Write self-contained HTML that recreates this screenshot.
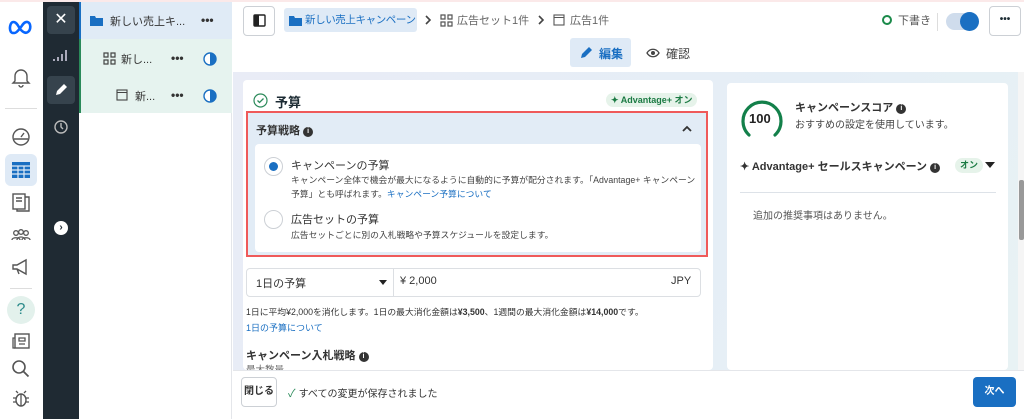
<!DOCTYPE html>
<html><head><meta charset="utf-8"><style>
*{box-sizing:border-box;margin:0;padding:0}
body{width:1024px;height:419px;overflow:hidden;font-family:"Liberation Sans","Noto Sans CJK JP",sans-serif;color:#1c2b33;background:#fff;position:relative;font-size:12px}
.abs{position:absolute;white-space:nowrap}
.ico{position:absolute;left:10px;width:22px;height:22px}
.i{display:inline-block;width:10px;height:10px;border-radius:50%;background:#333;color:#fff;font-size:7px;text-align:center;line-height:10px;vertical-align:1px}
</style></head><body>
<div class="abs" style="left:0;top:0;width:1024px;height:2px;background:#fbe9e9"></div>
<!-- left icon bar -->
<div class="abs" style="left:0;top:2px;width:43px;height:417px;background:#fff">
<svg class="abs" style="left:8px;top:17px" width="26" height="16" viewBox="0 0 26 16"><path d="M3 13C1 10 2 3 5.5 3S11 9 13 11s5 4 7.5 1.5S23 4 19.5 3 14 7 13 8 9 14 6.5 14 4 14 3 13Z" fill="none" stroke="#0866ff" stroke-width="2.6"/></svg>
<svg class="ico" style="top:64px" viewBox="0 0 22 22"><path d="M5 15V10a6 6 0 0 1 12 0v5l2 2H3zM9 19a2 2 0 0 0 4 0" fill="none" stroke="#555" stroke-width="1.4"/></svg>
<div class="abs" style="left:5px;top:106px;width:32px;height:1px;background:#ddd"></div>
<svg class="ico" style="top:124px" viewBox="0 0 22 22"><circle cx="11" cy="11" r="8" fill="none" stroke="#555" stroke-width="1.4"/><path d="M4 13h14M11 11l3-4" stroke="#555" stroke-width="1.4"/></svg>
<div class="abs" style="left:5px;top:152px;width:32px;height:32px;background:#dfeaf6;border-radius:6px"></div>
<svg class="ico" style="top:157px" viewBox="0 0 22 22"><rect x="2" y="3" width="18" height="16" fill="#1a6fc2"/><path d="M2 7h18M2 11h18M2 15h18M8 7v12M14 7v12" stroke="#dfeaf6" stroke-width="1.2"/></svg>
<svg class="ico" style="top:189px" viewBox="0 0 22 22"><rect x="3" y="3" width="12" height="15" fill="none" stroke="#555" stroke-width="1.4"/><path d="M15 6h4v14H7v-2M6 7h6M6 10h6" stroke="#555" stroke-width="1.4" fill="none"/></svg>
<svg class="ico" style="top:222px" viewBox="0 0 22 22"><circle cx="6" cy="9" r="2.3" fill="none" stroke="#555" stroke-width="1.3"/><circle cx="11" cy="8" r="2.3" fill="none" stroke="#555" stroke-width="1.3"/><circle cx="16" cy="9" r="2.3" fill="none" stroke="#555" stroke-width="1.3"/><path d="M2 16c0-3 8-3 8 0M7 16c0-4 8-4 8 0M12 16c0-3 8-3 8 0" fill="none" stroke="#555" stroke-width="1.3"/></svg>
<svg class="ico" style="top:254px" viewBox="0 0 22 22"><path d="M3 9h4l9-5v14l-9-5H3zM7 13l2 5" fill="none" stroke="#555" stroke-width="1.4"/></svg>
<div class="abs" style="left:10px;top:286px;width:22px;height:1px;background:#ddd"></div>
<div class="abs" style="left:7px;top:294px;width:28px;height:28px;border-radius:50%;background:#e3f1ec;color:#2a8a8a;text-align:center;line-height:28px;font-size:16px">?</div>
<svg class="ico" style="top:328px" viewBox="0 0 22 22"><rect x="5" y="4" width="14" height="14" fill="none" stroke="#555" stroke-width="1.4"/><path d="M5 8H3v10h2M9 8h6v3H9zM9 14h6" stroke="#555" stroke-width="1.3" fill="none"/></svg>
<svg class="ico" style="top:356px" viewBox="0 0 22 22"><circle cx="9" cy="9" r="6" fill="none" stroke="#555" stroke-width="1.6"/><path d="M13.5 13.5l5 5" stroke="#555" stroke-width="1.8"/></svg>
<svg class="ico" style="top:386px" viewBox="0 0 22 22"><ellipse cx="11" cy="12" rx="5" ry="6" fill="none" stroke="#555" stroke-width="1.4"/><path d="M11 6v12M6 10H3M6 14H3M16 10h3M16 14h3M8 5l-2-2M14 5l2-2" stroke="#555" stroke-width="1.3"/></svg>
</div>
<!-- dark bar -->
<div class="abs" style="left:43px;top:2px;width:36px;height:417px;background:#1f2a33">
<div class="abs" style="left:4px;top:4px;width:28px;height:28px;background:#36434d;border-radius:4px;color:#fff;text-align:center;line-height:28px;font-size:16px">✕</div>
<svg class="abs" style="left:10px;top:46px" width="16" height="14"><path d="M1 13v-2M5 13V9M9 13V6M13 13V2" stroke="#aab" stroke-width="2"/></svg>
<div class="abs" style="left:4px;top:74px;width:28px;height:28px;background:#36434d;border-radius:4px"></div>
<svg class="abs" style="left:11px;top:81px" width="14" height="14"><path d="M2 12l1-4 7-7 3 3-7 7z" fill="#fff"/></svg>
<svg class="abs" style="left:10px;top:117px" width="16" height="16"><circle cx="8" cy="8" r="6" fill="none" stroke="#bbb" stroke-width="1.4"/><path d="M8 4v4l2 2" stroke="#bbb" stroke-width="1.4" fill="none"/></svg>
<div class="abs" style="left:11px;top:219px;width:14px;height:14px;border-radius:50%;background:#fff;color:#1f2a33;font-size:10px;font-weight:bold;text-align:center;line-height:14px">›</div>
</div>
<!-- tree -->
<div class="abs" style="left:79px;top:2px;width:153px;height:417px;background:#fff;border-right:1px solid #e4e6ea">
<div class="abs" style="left:0;top:0;width:153px;height:37px;background:#e0ebf6;border-left:2px solid #1a6fc2"></div>
<svg class="abs" style="left:11px;top:13px" width="13" height="11"><path d="M0 1h5l1 2h7v8H0z" fill="#1a6fc2"/></svg>
<div class="abs" style="left:31px;top:11px;font-size:11px;color:#333">新しい売上キ...</div>
<div class="abs" style="left:122px;top:11px;font-size:12px;font-weight:bold;color:#333">•••</div>
<div class="abs" style="left:0;top:37px;width:153px;height:74px;background:#e6f3ef;border-left:2px solid #2b8a5a"></div>
<svg class="abs" style="left:24px;top:50px" width="13" height="13"><path d="M1 1h4v4H1zM8 1h4v4H8zM1 8h4v4H1zM8 8h4v4H8z" fill="none" stroke="#444" stroke-width="1.2"/></svg>
<div class="abs" style="left:42px;top:49px;font-size:11px;color:#333">新し...</div>
<div class="abs" style="left:92px;top:49px;font-size:12px;font-weight:bold;color:#333">•••</div>
<svg class="abs" style="left:124px;top:50px" width="14" height="14"><circle cx="7" cy="7" r="6" fill="#fff" stroke="#1a6fc2" stroke-width="1.4"/><path d="M7 1a6 6 0 0 1 0 12z" fill="#1a6fc2"/></svg>
<svg class="abs" style="left:37px;top:87px" width="12" height="12"><rect x="1" y="1" width="10" height="10" fill="none" stroke="#444" stroke-width="1.1"/><path d="M1 3.5h10" stroke="#444"/></svg>
<div class="abs" style="left:56px;top:86px;font-size:11px;color:#333">新...</div>
<div class="abs" style="left:92px;top:86px;font-size:12px;font-weight:bold;color:#333">•••</div>
<svg class="abs" style="left:124px;top:87px" width="14" height="14"><circle cx="7" cy="7" r="6" fill="#fff" stroke="#1a6fc2" stroke-width="1.4"/><path d="M7 1a6 6 0 0 1 0 12z" fill="#1a6fc2"/></svg>
</div>
<!-- main header -->
<div class="abs" style="left:233px;top:2px;width:791px;height:70px;background:#fff">
<div class="abs" style="left:10px;top:4px;width:32px;height:30px;border:1px solid #ccd0d5;border-radius:4px"></div>
<svg class="abs" style="left:20px;top:12px" width="13" height="13"><rect x="1" y="1" width="11" height="11" rx="1" fill="none" stroke="#222" stroke-width="1.4"/><rect x="1" y="1" width="5" height="11" fill="#222"/></svg>
<div class="abs" style="left:51px;top:6px;width:133px;height:24px;background:#dfeaf6;border-radius:3px"></div>
<svg class="abs" style="left:56px;top:13px" width="13" height="11"><path d="M0 1h5l1 2h7v8H0z" fill="#1a6fc2"/></svg>
<div class="abs" style="left:72px;top:10px;font-size:10.5px;letter-spacing:-0.4px;color:#1a6fc2">新しい売上キャンペーン</div>
<svg class="abs" style="left:192px;top:13px" width="7" height="10"><path d="M1 1l4 4-4 4" stroke="#444" stroke-width="1.6" fill="none"/></svg>
<svg class="abs" style="left:207px;top:12px" width="13" height="13"><path d="M1 1h4v4H1zM8 1h4v4H8zM1 8h4v4H1zM8 8h4v4H8z" fill="none" stroke="#555" stroke-width="1.2"/></svg>
<div class="abs" style="left:224px;top:10px;font-size:11px;color:#666">広告セット1件</div>
<svg class="abs" style="left:305px;top:13px" width="7" height="10"><path d="M1 1l4 4-4 4" stroke="#444" stroke-width="1.6" fill="none"/></svg>
<svg class="abs" style="left:320px;top:12px" width="12" height="12"><rect x="1" y="1" width="10" height="10" fill="none" stroke="#555" stroke-width="1.1"/><path d="M1 3.5h10" stroke="#555"/></svg>
<div class="abs" style="left:337px;top:10px;font-size:11px;color:#666">広告1件</div>
<div class="abs" style="left:649px;top:13px;width:10px;height:10px;border:2px solid #1b8a4a;border-radius:50%"></div>
<div class="abs" style="left:665px;top:10px;font-size:11px;color:#555">下書き</div>
<div class="abs" style="left:704px;top:11px;width:1px;height:18px;background:#ddd"></div>
<div class="abs" style="left:713px;top:11px;width:32px;height:17px;border-radius:9px;background:#cfdcec"></div>
<div class="abs" style="left:727px;top:10px;width:19px;height:19px;border-radius:50%;background:#1a6fc2"></div>
<div class="abs" style="left:756px;top:4px;width:32px;height:30px;border:1px solid #ccd0d5;border-radius:4px;text-align:center;line-height:26px;font-weight:bold;font-size:10px">•••</div>
<div class="abs" style="left:337px;top:36px;width:61px;height:29px;background:#dfeaf6;border-radius:3px"></div>
<svg class="abs" style="left:346px;top:44px" width="14" height="14"><path d="M2 12l1-4 7-7 3 3-7 7z" fill="#1a6fc2"/></svg>
<div class="abs" style="left:366px;top:43px;font-size:12px;font-weight:bold;color:#1a6fc2">編集</div>
<svg class="abs" style="left:413px;top:46px" width="14" height="10"><path d="M1 5c3-5 9-5 12 0-3 5-9 5-12 0z" fill="none" stroke="#444" stroke-width="1.3"/><circle cx="7" cy="5" r="2" fill="#444"/></svg>
<div class="abs" style="left:433px;top:43px;font-size:12px;color:#444">確認</div>
</div>
<!-- content bg -->
<div class="abs" style="left:233px;top:72px;width:785px;height:298px;background:linear-gradient(120deg,#e9ecf6,#e5eef6 60%,#e8f2f4)"></div>
<div class="abs" style="left:1018px;top:72px;width:6px;height:298px;background:#f5f5f5"></div>
<div class="abs" style="left:1019px;top:180px;width:5px;height:60px;background:#999;border-radius:2px"></div>
<!-- main card -->
<div class="abs" style="left:243px;top:80px;width:470px;height:290px;background:#fff;border-radius:4px">
<svg class="abs" style="left:10px;top:13px" width="15" height="15"><circle cx="7.5" cy="7.5" r="6.5" fill="none" stroke="#2b8a5a" stroke-width="1.2"/><path d="M4.5 7.5l2 2 4-4" stroke="#2b8a5a" stroke-width="1.3" fill="none"/></svg>
<div class="abs" style="left:32px;top:12px;font-size:13px;font-weight:bold">予算</div>
<div class="abs" style="left:363px;top:13px;height:14px;padding:0 5px;border-radius:7px;background:#e6f3ea;color:#1b7a43;font-size:9px;font-weight:bold;line-height:14px">✦ Advantage+ オン</div>
</div>
<div class="abs" style="left:246px;top:111px;width:462px;height:146px;border:2px solid #ef5a5a;background:#e2ecf6"></div>
<div class="abs" style="left:256px;top:122px;font-size:11px;font-weight:bold;color:#333">予算戦略 <span class="i">i</span></div>
<svg class="abs" style="left:682px;top:125px" width="10" height="7"><path d="M1 6l4-4 4 4" stroke="#333" stroke-width="1.8" fill="none"/></svg>
<div class="abs" style="left:255px;top:144px;width:446px;height:108px;background:#fff;border-radius:4px"></div>
<div class="abs" style="left:264px;top:157px;width:19px;height:19px;border:1px solid #ccd0d5;border-radius:50%"></div>
<div class="abs" style="left:269px;top:162px;width:9px;height:9px;background:#1a6fc2;border-radius:50%"></div>
<div class="abs" style="left:291px;top:157px;font-size:11px;color:#333">キャンペーンの予算</div>
<div class="abs" style="left:291px;top:173px;width:410px;white-space:normal;font-size:8.8px;line-height:14px;color:#444">キャンペーン全体で機会が最大になるように自動的に予算が配分されます。「Advantage+ キャンペーン予算」とも呼ばれます。<span style="color:#1a6fc2">キャンペーン予算について</span></div>
<div class="abs" style="left:264px;top:210px;width:19px;height:19px;border:1px solid #ccd0d5;border-radius:50%"></div>
<div class="abs" style="left:291px;top:211px;font-size:11px;color:#333">広告セットの予算</div>
<div class="abs" style="left:291px;top:228px;font-size:8.8px;color:#444">広告セットごとに別の入札戦略や予算スケジュールを設定します。</div>
<div class="abs" style="left:246px;top:268px;width:455px;height:29px;border:1px solid #dcdfe3;border-radius:4px"></div>
<div class="abs" style="left:393px;top:268px;width:1px;height:29px;background:#dcdfe3"></div>
<div class="abs" style="left:256px;top:275px;font-size:11px;color:#333">1日の予算</div>
<div class="abs" style="left:379px;top:280px;border-left:4px solid transparent;border-right:4px solid transparent;border-top:5px solid #222"></div>
<div class="abs" style="left:400px;top:275px;font-size:11px;color:#333">¥ 2,000</div>
<div class="abs" style="left:671px;top:275px;font-size:11px;color:#333">JPY</div>
<div class="abs" style="left:246px;top:305px;font-size:8.8px;color:#333">1日に平均¥2,000を消化します。1日の最大消化金額は<b>¥3,500</b>、1週間の最大消化金額は<b>¥14,000</b>です。</div>
<div class="abs" style="left:246px;top:321px;font-size:9px;color:#1a6fc2">1日の予算について</div>
<div class="abs" style="left:246px;top:347px;font-size:11px;font-weight:bold;color:#333">キャンペーン入札戦略 <span class="i">i</span></div>
<div class="abs" style="left:246px;top:362px;font-size:9.5px;color:#666;height:8px;overflow:hidden">最大数量</div>
<!-- right card -->
<div class="abs" style="left:727px;top:83px;width:281px;height:287px;background:#fff;border-radius:4px">
<svg class="abs" style="left:12px;top:13px" width="46" height="44"><path d="M10 39A19 19 0 1 1 36 39" fill="none" stroke="#13804a" stroke-width="3.2" stroke-linecap="round"/></svg>
<div class="abs" style="left:22px;top:28px;font-size:13px;font-weight:bold;color:#222">100</div>
<div class="abs" style="left:68px;top:16px;font-size:11px;font-weight:bold;color:#333">キャンペーンスコア <span class="i">i</span></div>
<div class="abs" style="left:68px;top:33px;font-size:10px;color:#444">おすすめの設定を使用しています。</div>
<div class="abs" style="left:13px;top:75px;font-size:11px;font-weight:bold;color:#333">✦ Advantage+ セールスキャンペーン <span class="i">i</span></div>
<div class="abs" style="left:228px;top:75px;padding:0 5px;height:15px;border-radius:8px;background:#e6f3ea;color:#1b7a43;font-size:9px;font-weight:bold;line-height:15px">オン</div>
<div class="abs" style="left:258px;top:79px;border-left:5px solid transparent;border-right:5px solid transparent;border-top:6px solid #222"></div>
<div class="abs" style="left:13px;top:109px;width:256px;height:1px;background:#dde2e8"></div>
<div class="abs" style="left:26px;top:124px;font-size:10px;color:#555">追加の推奨事項はありません。</div>
</div>
<!-- footer -->
<div class="abs" style="left:233px;top:370px;width:791px;height:49px;background:#fff;border-top:1px solid #e4e6ea">
<div class="abs" style="left:8px;top:6px;width:36px;height:30px;border:1px solid #ccd0d5;border-radius:4px;text-align:center;line-height:28px;font-size:10px;font-weight:bold;color:#333">閉じる</div>
<div class="abs" style="left:55px;top:14px;font-size:11px;color:#2b8a5a">✓ <span style="color:#333;font-size:10px">すべての変更が保存されました</span></div>
<div class="abs" style="left:740px;top:6px;width:43px;height:30px;background:#1a6fc2;border-radius:4px;color:#fff;text-align:center;line-height:30px;font-size:10px;font-weight:bold">次へ</div>
</div>
</body></html>
